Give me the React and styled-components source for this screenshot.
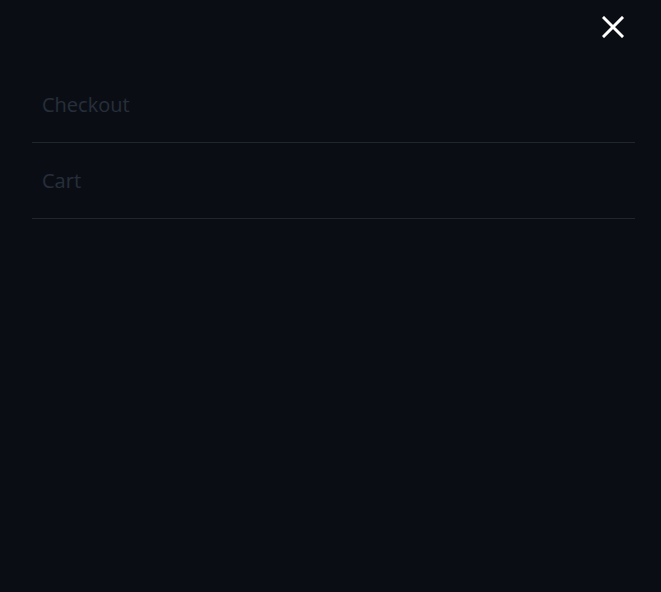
import React from "react";
import styled, { createGlobalStyle } from "styled-components";

const Global = createGlobalStyle`
  html, body { margin: 0; padding: 0; background: #0a0e14; }
  body { font-family: "Open Sans", "Noto Sans", sans-serif; }
`;

const Panel = styled.div`
  width: 661px;
  height: 592px;
  background: #0a0e14;
  position: relative;
  box-sizing: border-box;
  padding: 67px 26px 0 32px;
`;

const CloseButton = styled.button`
  position: absolute;
  top: 12px;
  right: 33px;
  width: 30px;
  height: 30px;
  padding: 0;
  border: none;
  background: transparent;
  display: flex;
  align-items: center;
  justify-content: center;
  cursor: pointer;
`;

const Menu = styled.nav`
  display: flex;
  flex-direction: column;
`;

const MenuItem = styled.a`
  display: flex;
  align-items: center;
  height: 75px;
  padding-left: 10px;
  border-bottom: 1px solid #1f262d;
  color: #272e3b;
  font-size: 20px;
  text-decoration: none;
`;

export default function App() {
  return (
    <>
      <Global />
      <Panel>
        <CloseButton aria-label="Close">
          <svg width="22" height="22" viewBox="0 0 22 22">
            <path d="M2 2 L20 20 M20 2 L2 20" stroke="#ffffff" strokeWidth="3" strokeLinecap="square" />
          </svg>
        </CloseButton>
        <Menu>
          <MenuItem href="#">Checkout</MenuItem>
          <MenuItem href="#">Cart</MenuItem>
        </Menu>
      </Panel>
    </>
  );
}
